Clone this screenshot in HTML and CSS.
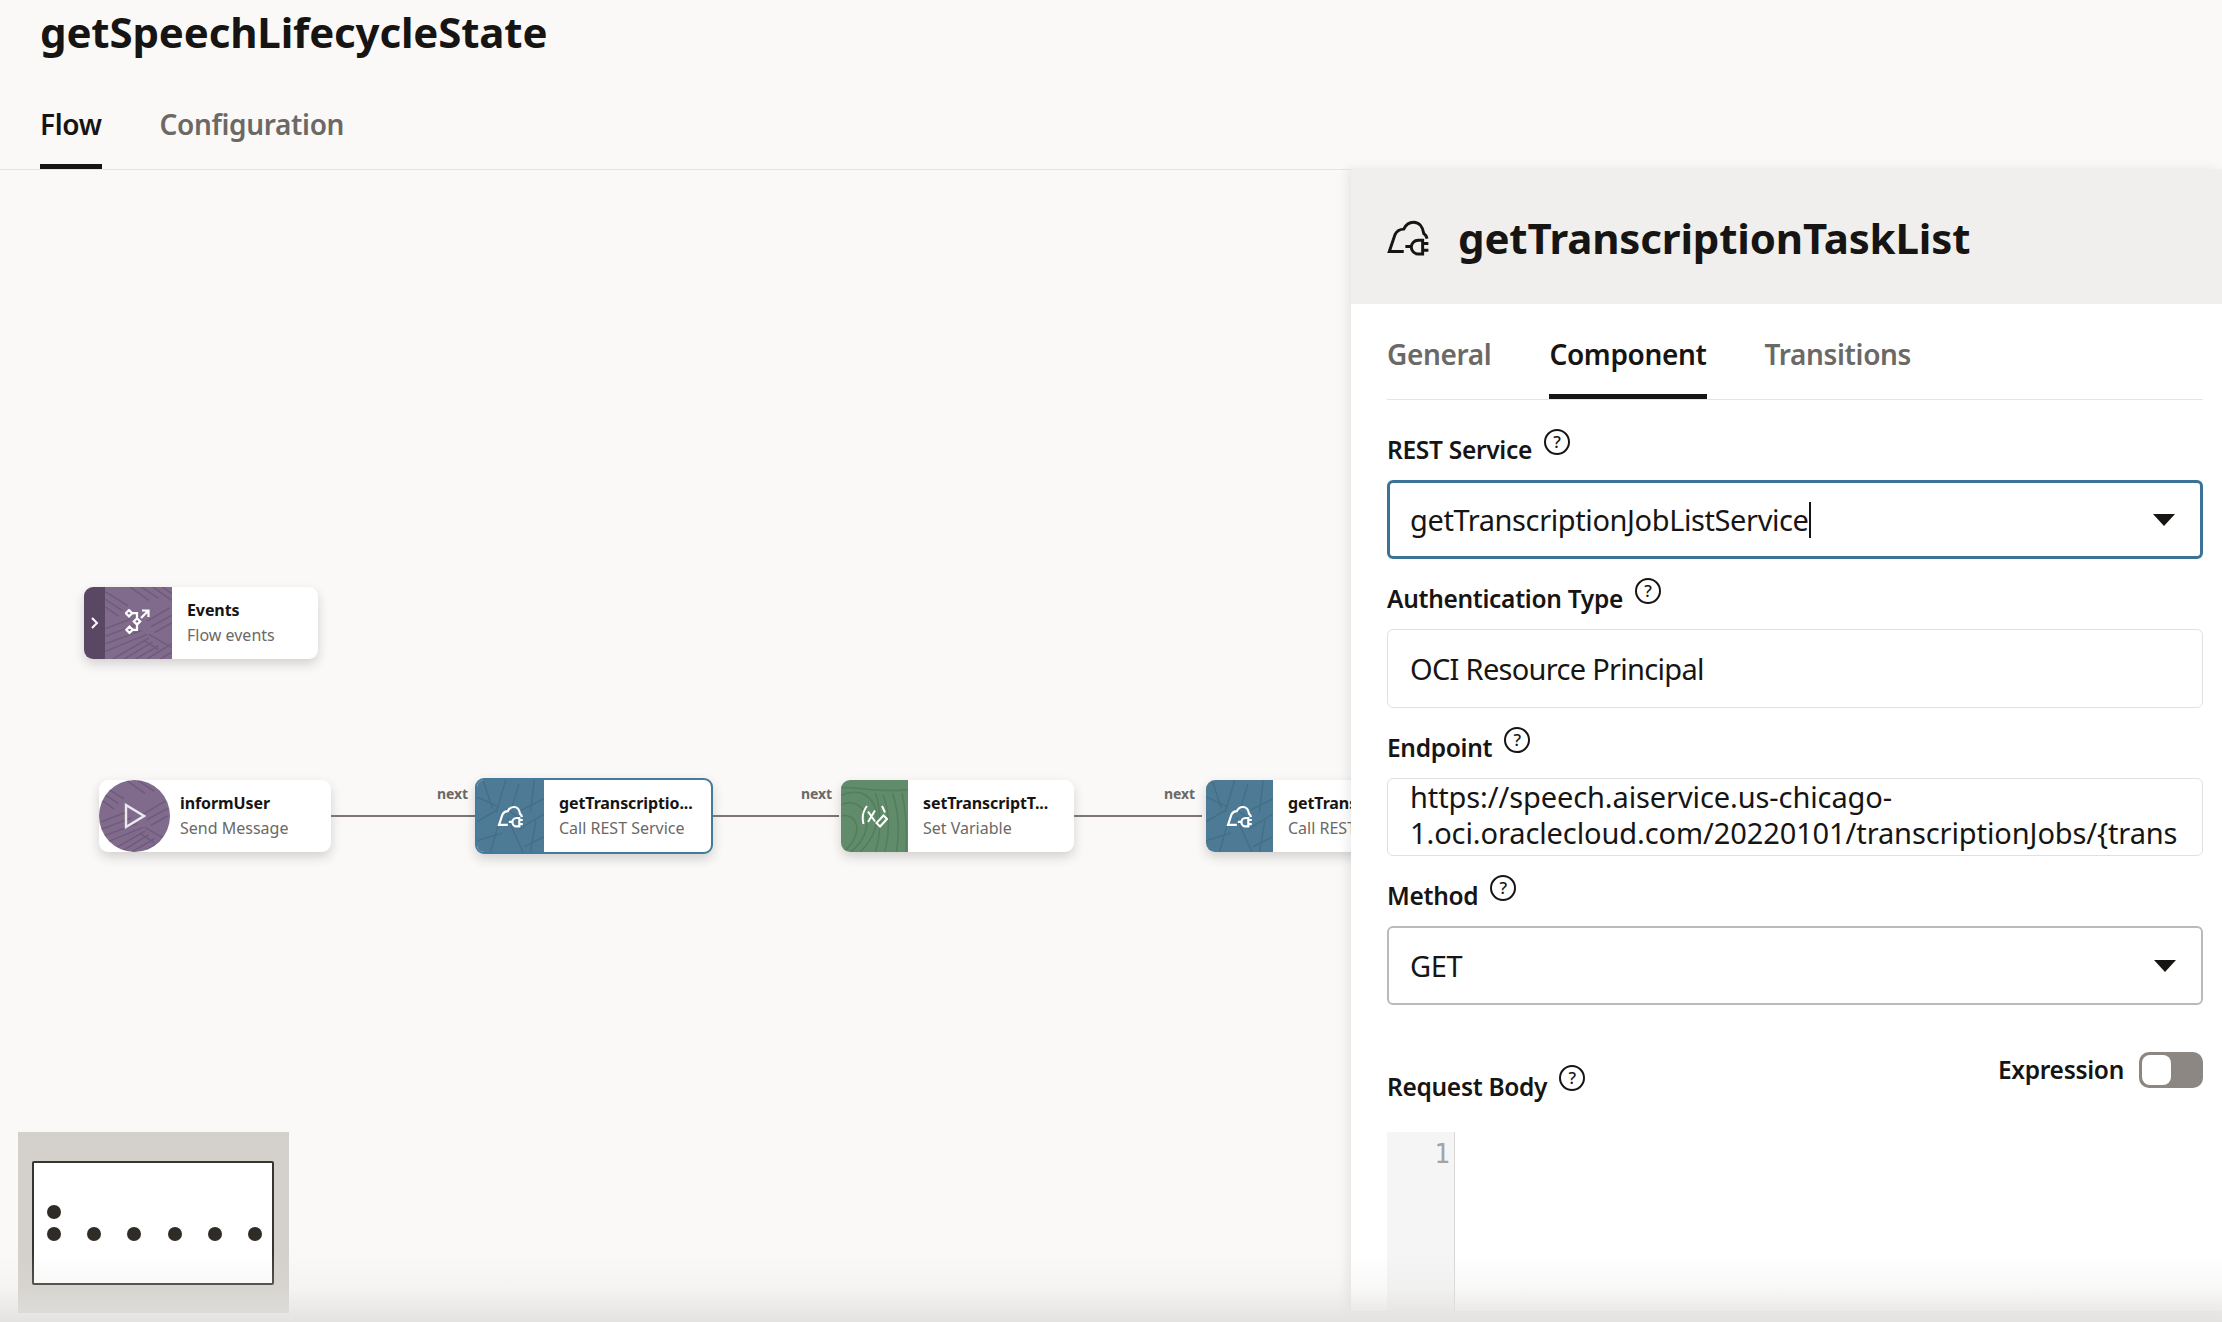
FILE: index.html
```html
<!DOCTYPE html>
<html lang="en">
<head>
    <meta charset="UTF-8">
    <title>getSpeechLifecycleState</title>
    <link rel="stylesheet" href="styles.css">
</head>
<body>

    <svg class="defs" width="0" height="0">
        <defs>
            <g id="texture-purple" fill="none" stroke="#3c2b47" stroke-opacity="0.24" stroke-width="1.600">
                <path d="M0 5l24 15M0 13l18 12M0 21l14 10M26 0l20 14M38 0l18 12M50 0l20 14M60 0l10 7M68 22L44 36M70 30L48 42M70 38L52 48M0 44l26-10M0 52l32-12M0 60l38-14M0 68l44-18M8 76l38-22M20 76l30-18M32 76l24-14M44 76l26-16M58 76l12-7M46 50l24 14M40 56l16 10"/>
            </g>
            <g id="texture-blue" fill="none" stroke="#1f4258" stroke-opacity="0.2" stroke-width="1.400">
                <path d="M6 0l10 30M0 18l22 10M30 0L20 34M44 4l-8 26M60 0l-4 34M70 20L46 32M0 44l20-12M14 76l10-36M32 40l16 36M0 64l26-8M44 52l26-16M56 76l6-34M70 60L50 70M30 30l14 10"/>
            </g>
            <g id="texture-green" fill="none" stroke="#2f5a3b" stroke-opacity="0.28" stroke-width="1.600">
                <path d="M0 8c20 0 48 6 70 2M0 16C14 10 30 12 36 30S30 66 20 76M0 26c10-4 22-2 26 12S22 66 10 76M0 38c8-2 14 2 16 10S12 68 2 76M44 16c6 14 8 36 2 60M54 14c6 18 8 40 4 62M64 14c4 18 6 44 4 62M36 14c6 16 6 44 0 62"/>
            </g>
            <g id="cloud-plug" fill="none" stroke="currentColor">
                <path d="M10.800 22.800H2L5.500 12.500c1-2 3-3.300 5.300-3.300C12 6.500 14.500 5 16.800 5c3.400 0 5.700 2.800 6.200 6.900 1 .7 1.700 1.800 2 3.100"/>
                <path d="M11.800 19.800H15.400M22.300 16H19.600a4.200 4.200 0 0 0 0 8.400H22.300zM22.300 18H25.800M22.300 22.100H25.800"/>
            </g>
        </defs>
    </svg>

    <header class="page-head">
        <h1>getSpeechLifecycleState</h1>
        <nav class="tabs page-tabs">
            <a class="tab active">Flow</a>
            <a class="tab">Configuration</a>
        </nav>
    </header>

    <main class="workspace">
        <section class="canvas">
            <div class="node events">
                <div class="events-toggle">
                    <svg width="10" height="14" viewBox="0 0 10 14"><path d="M2 2l5 5-5 5" fill="none" stroke="#fff" stroke-width="2"/></svg>
                </div>
                <div class="node-img purple">
                    <svg class="tex" width="67" height="72" viewBox="0 0 70 76"><use href="#texture-purple"/></svg>
                    <svg class="ic" width="28" height="28" viewBox="0 0 28 28" fill="none" stroke="#fff" stroke-width="2.200">
                        <path d="M4 1L7.200 4.200 4 7.400 .8 4.200zM12 9.200l3.200 3.200-3.200 3.200-3.200-3.200zM4.500 17.600l3.200 3.200-3.200 3.200-3.200-3.200z"/>
                        <path d="M7.200 4.200H12v5M12 15.600v5.200H7.700M16 9l7-7M17 1.500h6.500V8"/>
                    </svg>
                </div>
                <div class="node-text">
                    <strong>Events</strong>
                    <span>Flow events</span>
                </div>
            </div>

            <div class="node inform">
                <div class="node-img round purple">
                    <svg class="tex" width="71" height="72" viewBox="0 0 70 76"><use href="#texture-purple"/></svg>
                    <svg class="ic" width="22" height="26" viewBox="0 0 22 26"><path d="M2 2l18 11L2 24z" fill="none" stroke="#fff" stroke-opacity=".85" stroke-width="2.400"/></svg>
                </div>
                <div class="node-text">
                    <strong>informUser</strong>
                    <span>Send Message</span>
                </div>
            </div>

            <div class="link l1"><span>next</span></div>

            <div class="node rest selected">
                <div class="node-img blue">
                    <svg class="tex" width="67" height="72" viewBox="0 0 70 76"><use href="#texture-blue"/></svg>
                    <svg class="ic plug" width="28" height="28" viewBox="0 0 28 28"><use href="#cloud-plug"/></svg>
                </div>
                <div class="node-text">
                    <strong>getTranscriptio...</strong>
                    <span>Call REST Service</span>
                </div>
            </div>

            <div class="link l2"><span>next</span></div>

            <div class="node setvar">
                <div class="node-img green">
                    <svg class="tex" width="67" height="72" viewBox="0 0 70 76"><use href="#texture-green"/></svg>
                    <svg class="ic" width="27" height="23" viewBox="0 0 27 23" fill="none" stroke="#fff" stroke-width="2">
                        <path d="M6 1C2 6 1 13 2.500 19M21 1l3 6.500M7 6.500l7 10M14 5.500L7 17M15.500 18l7-7.500 3.500 3.500-7 7.500z"/>
                    </svg>
                </div>
                <div class="node-text">
                    <strong>setTranscriptT...</strong>
                    <span>Set Variable</span>
                </div>
            </div>

            <div class="link l3"><span>next</span></div>

            <div class="node rest2">
                <div class="node-img blue">
                    <svg class="tex" width="67" height="72" viewBox="0 0 70 76"><use href="#texture-blue"/></svg>
                    <svg class="ic plug" width="28" height="28" viewBox="0 0 28 28"><use href="#cloud-plug"/></svg>
                </div>
                <div class="node-text">
                    <strong>getTranscriptio...</strong>
                    <span>Call REST Service</span>
                </div>
            </div>

            <div class="minimap">
                <div class="minimap-view">
                    <i class="dot d0"></i>
                    <div class="dot-row">
                        <i class="dot"></i><i class="dot"></i><i class="dot"></i><i class="dot"></i><i class="dot"></i><i class="dot"></i>
                    </div>
                </div>
            </div>
        </section>

        <aside class="panel">
            <div class="panel-head">
                <svg class="panel-icon" width="46" height="46" viewBox="0 0 28 28"><use href="#cloud-plug"/></svg>
                <h2>getTranscriptionTaskList</h2>
            </div>
            <div class="panel-body">
                <nav class="tabs panel-tabs">
                    <a class="tab">General</a>
                    <a class="tab active">Component</a>
                    <a class="tab">Transitions</a>
                </nav>

                <div class="field first">
                    <label>REST Service <span class="help">?</span></label>
                    <div class="input focused">
                        <span>getTranscriptionJobListService</span><i class="caret"></i>
                        <b class="arrow"></b>
                    </div>
                </div>

                <div class="field">
                    <label>Authentication Type <span class="help">?</span></label>
                    <div class="input tight">OCI Resource Principal</div>
                </div>

                <div class="field">
                    <label>Endpoint <span class="help">?</span></label>
                    <div class="input area">https://speech.aiservice.us-chicago-<br>1.oci.oraclecloud.com/20220101/transcriptionJobs/{trans</div>
                </div>

                <div class="field">
                    <label>Method <span class="help">?</span></label>
                    <div class="input strong-border">GET<b class="arrow"></b></div>
                </div>

                <div class="body-head">
                    <label>Request Body <span class="help">?</span></label>
                    <div class="expression">
                        <span>Expression</span>
                        <div class="switch"><i></i></div>
                    </div>
                </div>

                <div class="code">
                    <div class="gutter">1</div>
                </div>
            </div>
        </aside>
    </main>

    <div class="bottom-fade"></div>

</body>
</html>
```

FILE: styles.css
```css
* {
    box-sizing: border-box;
}

html, body {
    height: 100%;
}

body {
    margin: 0;
    display: flex;
    flex-direction: column;
    height: 1322px;
    overflow: hidden;
    font-family: "Noto Sans", "Open Sans", sans-serif;
    background: #faf9f7;
    color: #161513;
}

.defs {
    position: absolute;
}

/* page header */
.page-head {
    flex: none;
    padding: 0 0 0 40px;
    height: 170px;
    border-bottom: 1px solid #e6e5e3;
}

h1 {
    margin: 0;
    padding-top: 4px;
    font-size: 42px;
    line-height: 56px;
    font-weight: 700;
    letter-spacing: -0.15px;
}

.tabs {
    display: flex;
}

.tab {
    display: block;
    font-size: 28px;
    font-weight: 600;
    letter-spacing: -0.35px;
    color: #6b6966;
    line-height: 40px;
}

.tab.active {
    color: #161513;
    border-bottom: 5px solid #161513;
}

.page-tabs {
    gap: 58px;
    padding-top: 44px;
}

.page-tabs .tab {
    height: 65px;
}

/* canvas + panel */
.workspace {
    flex: 1;
    display: flex;
    min-height: 0;
    position: relative;
    margin-top: -1px;
}

.canvas {
    position: relative;
    width: 1351px;
    flex: none;
    overflow: hidden;
}

.node {
    position: absolute;
    display: flex;
    height: 72px;
    background: #fff;
    border-radius: 9px;
    box-shadow: 0 5px 12px rgba(0, 0, 0, 0.16);
}

.node-img {
    position: relative;
    flex: none;
    width: 67px;
    height: 100%;
    display: flex;
    align-items: center;
    justify-content: center;
    overflow: hidden;
    border-radius: 9px 0 0 9px;
}

.node-img .tex {
    position: absolute;
    left: 0;
    top: 0;
}

.node-img .ic {
    position: relative;
}

.plug {
    color: #fff;
    stroke-width: 2.2;
}

.purple { background: #806b8c; }
.blue { background: #4d7a94; }
.green { background: #618c6b; }

.node-img.round {
    width: 71px;
    border-radius: 50%;
}

.node-text {
    display: flex;
    flex-direction: column;
    justify-content: center;
    padding-left: 15px;
    white-space: nowrap;
    overflow: hidden;
    font-size: 16px;
    line-height: 25px;
}

.node-text strong {
    font-weight: 700;
    letter-spacing: -0.1px;
}

.node-text span {
    color: #6b6966;
}

.events {
    left: 84px;
    top: 418px;
    width: 234px;
}

.events-toggle {
    flex: none;
    width: 21px;
    display: flex;
    align-items: center;
    justify-content: center;
    background: #5a4764;
    border-radius: 9px 0 0 9px;
}

.events .node-img {
    border-radius: 0;
}

.inform {
    left: 99px;
    top: 611px;
    width: 232px;
}

.inform .node-text {
    padding-left: 10px;
}

.selected {
    left: 475px;
    top: 609px;
    width: 238px;
    height: 76px;
    border: 2px solid #437b9c;
}

.selected .node-img {
    border-radius: 7px 0 0 7px;
}

.setvar {
    left: 841px;
    top: 611px;
    width: 233px;
}

.rest2 {
    left: 1206px;
    top: 611px;
    width: 233px;
}

.link {
    position: absolute;
    top: 646px;
    height: 2px;
    background: #7d7571;
}

.link span {
    position: absolute;
    right: 7px;
    top: -31px;
    font-size: 14px;
    line-height: 20px;
    font-weight: 700;
    letter-spacing: -0.1px;
    color: #6b6966;
}

.l1 { left: 331px; width: 144px; }
.l2 { left: 713px; width: 126px; }
.l3 { left: 1074px; width: 128px; }

.minimap {
    position: absolute;
    left: 18px;
    top: 963px;
    width: 271px;
    height: 181px;
    background: #d4d1cc;
    padding: 29px 15px 28px 14px;
}

.minimap-view {
    position: relative;
    height: 124px;
    background: #fff;
    border: 2px solid #38342f;
    border-radius: 2px;
    padding: 64px 10px 0 13px;
}

.dot-row {
    display: flex;
    justify-content: space-between;
}

.dot {
    display: block;
    width: 14px;
    height: 14px;
    border-radius: 50%;
    background: #2f2b27;
}

.d0 {
    position: absolute;
    left: 13px;
    top: 42px;
}

/* right panel */
.panel {
    position: relative;
    flex: none;
    width: 871px;
    height: 1142px;
    background: #fff;
    box-shadow: -4px 0 10px rgba(0, 0, 0, 0.08);
    display: flex;
    flex-direction: column;
}

.panel-head {
    flex: none;
    height: 135px;
    background: #f0efed;
    display: flex;
    align-items: center;
    padding-left: 35px;
    gap: 26px;
}

.panel-icon {
    flex: none;
    color: #161513;
    stroke-width: 1.8;
}

h2 {
    margin: 0;
    padding-top: 2px;
    font-size: 42px;
    line-height: 56px;
    font-weight: 700;
    letter-spacing: -0.15px;
}

.panel-body {
    flex: 1;
    display: flex;
    flex-direction: column;
    padding: 0 19px 0 36px;
    min-height: 0;
}

.panel-tabs {
    flex: none;
    height: 96px;
    gap: 58px;
    padding-top: 30px;
    border-bottom: 1px solid #e6e5e3;
}

.panel-tabs .tab {
    height: 65px;
}

.field {
    flex: none;
    padding-top: 20px;
}

.field.first {
    padding-top: 30px;
}

label {
    display: flex;
    align-items: flex-start;
    gap: 12px;
    height: 50px;
    padding-top: 2px;
    font-size: 24.500px;
    line-height: 36px;
    font-weight: 600;
    letter-spacing: -0.3px;
    color: #161513;
}

.help {
    flex: none;
    display: block;
    width: 26px;
    height: 26px;
    margin-top: -3px;
    border: 2px solid #161513;
    border-radius: 50%;
    font-size: 17px;
    line-height: 22px;
    font-weight: 500;
    letter-spacing: 0;
    text-align: center;
}

.input {
    position: relative;
    height: 79px;
    padding: 0 60px 0 22px;
    display: flex;
    align-items: center;
    border: 1px solid #e2e1df;
    border-radius: 6px;
    font-size: 29px;
    letter-spacing: -0.4px;
    color: #161513;
    background: #fff;
    white-space: nowrap;
    overflow: hidden;
}

.tight {
    letter-spacing: -0.7px;
}

.focused {
    border: 3px solid #3b7396;
    padding-left: 20px;
}

.strong-border {
    border: 2px solid #bcbab6;
    padding-left: 21px;
}

.area {
    display: block;
    padding: 0 0 0 22px;
    line-height: 36px;
    height: 78px;
    letter-spacing: -0.1px;
}

.caret {
    display: block;
    width: 2px;
    height: 36px;
    background: #161513;
}

.arrow {
    position: absolute;
    right: 25px;
    top: 50%;
    margin-top: -6px;
    width: 0;
    height: 0;
    border-left: 11px solid transparent;
    border-right: 11px solid transparent;
    border-top: 12px solid #161513;
}

.body-head {
    flex: none;
    display: flex;
    justify-content: space-between;
    align-items: flex-start;
    height: 127px;
    padding-top: 47px;
}

.body-head label {
    padding-top: 17px;
}

.body-head .help {
    margin-top: -4px;
}

.expression {
    display: flex;
    align-items: center;
    gap: 15px;
    font-size: 24.500px;
    line-height: 36px;
    font-weight: 600;
    letter-spacing: -0.3px;
}

.switch {
    width: 64px;
    height: 36px;
    background: #8c8782;
    border-radius: 10px;
    padding: 3px;
}

.switch i {
    display: block;
    width: 29px;
    height: 30px;
    background: #fff;
    border-radius: 8px;
}

.code {
    flex: 1;
    min-height: 0;
}

.gutter {
    width: 68px;
    height: 100%;
    background: #f5f5f5;
    border-right: 1px solid #d8d8d8;
    text-align: right;
    padding: 5px 4px 0 0;
    font-family: "DejaVu Sans Mono", "Liberation Mono", monospace;
    font-size: 26px;
    line-height: 34px;
    color: #a3a3a3;
}

.bottom-fade {
    position: absolute;
    left: 0;
    right: 0;
    bottom: 0;
    height: 70px;
    background: linear-gradient(to bottom, rgba(225, 224, 222, 0), rgba(225, 224, 222, 0.2) 50%, rgba(225, 224, 222, 0.9));
    pointer-events: none;
}
```
